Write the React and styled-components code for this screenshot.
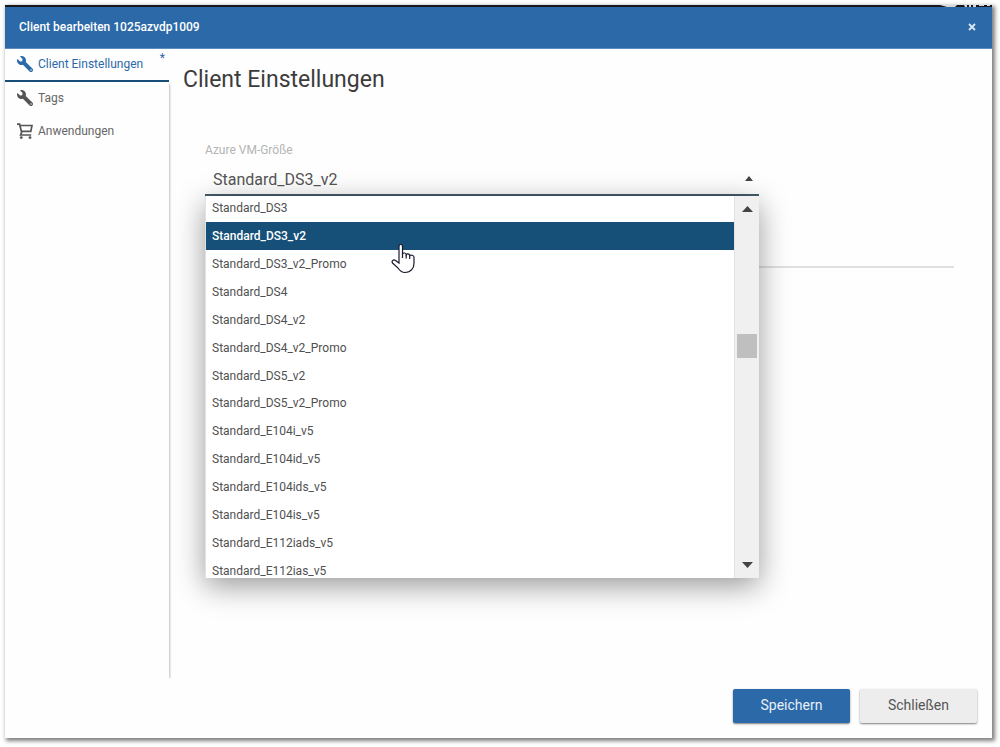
import React, { useState } from 'react';
import styled, { createGlobalStyle } from 'styled-components';
import { FaWrench } from 'react-icons/fa';

const GlobalStyle = createGlobalStyle`
  * {
    box-sizing: border-box;
  }

  body {
    margin: 0;
    background: #FFFFFF;
    color: #444444;
    font-family: Roboto, sans-serif;
    font-size: 12px;
  }

  button, select {
    font-family: inherit;
  }
`;

const Page = styled.div`
  display: flex;
  min-height: 100vh;
  padding: 5px 8px 9px 5px;
`;

const Dialog = styled.section`
  display: flex;
  flex: 1;
  flex-direction: column;
  background: #FEFEFE;
  box-shadow: 2px 2px 4px 1px rgba(0, 0, 0, 0.5);
`;

const TopStrip = styled.div`
  display: flex;
  justify-content: flex-end;
  height: 2px;
  background: #16181C;
`;

const Header = styled.header`
  display: flex;
  align-items: center;
  justify-content: space-between;
  height: 42px;
  padding: 0 14px 2px;
  background: #2B69A8;
  border-bottom: 1px solid #5B8DBF;
  color: #FFFFFF;
`;

const Title = styled.h1`
  margin: 0;
  font-size: 12px;
  font-weight: 500;
  line-height: 16px;
`;

const CloseButton = styled.button`
  display: flex;
  align-items: center;
  justify-content: center;
  width: 12px;
  height: 16px;
  padding: 0;
  border: 0;
  background: none;
  color: #DCE8F4;
`;

const Body = styled.div`
  display: flex;
  flex: 1;
`;

const Sidebar = styled.nav`
  display: flex;
  flex-direction: column;
  flex: 0 0 164px;
`;

const Tab = styled.a`
  display: flex;
  align-items: center;
  gap: 5px;
  height: 33px;
  padding: 0 4px 2px 12px;
  border-bottom: ${props => props.$active ? '2px solid #165078' : '0'};
  color: ${props => props.$active ? '#2B69A8' : '#666666'};
  font-size: 12px;
  text-decoration: none;

  svg {
    width: 16px;
    height: 16px;
    color: ${props => props.$active ? '#2B69A8' : '#555555'};
  }
`;

const WrenchIcon = styled(FaWrench)`
  transform: scaleX(-1);
`;

const Changed = styled.sup`
  align-self: flex-start;
  margin-left: auto;
  font-size: 12px;
  line-height: 18px;
`;

const TabRest = styled.div`
  flex: 1;
  margin-bottom: 58px;
  box-shadow: 3px 0 2px -2px rgba(0, 0, 0, 0.25);
`;

const Main = styled.main`
  display: flex;
  flex: 1;
  flex-direction: column;
  padding: 15px 15px 15px 14px;
`;

const Heading = styled.h2`
  margin: 0;
  color: #3C3C3C;
  font-size: 23px;
  font-weight: 400;
  line-height: 32px;
`;

const Form = styled.div`
  flex: 1;
  padding: 46px 23px 0 22px;
`;

const Label = styled.label`
  display: block;
  color: #B4B4B4;
  font-size: 12px;
  line-height: 16px;
`;

const Field = styled.div`
  position: relative;
  width: 74%;
  min-width: 200px;
  margin-top: 5px;
`;

const Control = styled.div`
  display: flex;
  align-items: center;
  height: 33px;
  padding-right: 6px;
  border-bottom: 2px solid #445B69;
`;

const Select = styled.select`
  flex: 1;
  padding: 2px 8px 0;
  border: 0;
  outline: 0;
  appearance: none;
  background: none;
  color: #555555;
  font-size: 16px;
  line-height: 20px;
`;

const Popup = styled.div`
  position: absolute;
  top: 100%;
  left: 0;
  display: flex;
  width: 100%;
  height: 382px;
  overflow: hidden;
  border-left: 1px solid #E2E2E2;
  background: #FFFFFF;
`;

const Shadow = styled.div`
  position: absolute;
  top: 100%;
  left: 0;
  width: 100%;
  height: 382px;
  box-shadow: 0 8px 28px rgba(0, 0, 0, 0.4);
`;

const List = styled.ul`
  display: grid;
  flex: 1;
  grid-auto-rows: 1fr;
  height: 391px;
  margin: -2px 0 0;
  padding: 0;
  list-style: none;
`;

const Option = styled.li`
  display: flex;
  align-items: center;
  padding: 0 6px;
  background: ${props => props.$selected ? '#165078' : 'transparent'};
  color: ${props => props.$selected ? '#FFFFFF' : '#505050'};
  font-weight: ${props => props.$selected ? 500 : 400};
`;

const Scrollbar = styled.div`
  display: flex;
  flex-direction: column;
  align-items: center;
  width: 25px;
  border-left: 1px solid #E2E2E2;
  background: #F0F0F0;
`;

const ScrollButton = styled.button`
  display: flex;
  align-items: center;
  justify-content: center;
  width: 24px;
  height: 26px;
  padding: 0;
  border: 0;
  background: none;
  color: #444444;
`;

const Track = styled.div`
  flex: 1;
  padding-top: 112px;
`;

const Thumb = styled.div`
  width: 20px;
  height: 24px;
  background: #BFBFBF;
`;

const Divider = styled.hr`
  height: 2px;
  margin: 70px 0 0;
  border: 0;
  background: #E0E0E0;
`;

const Footer = styled.footer`
  display: flex;
  justify-content: flex-end;
  gap: 10px;
`;

const Button = styled.button`
  width: 117px;
  height: 34px;
  padding: 0 0 2px;
  border: 0;
  border-radius: 2px;
  background: ${props => props.$primary ? '#2B69A8' : '#EDEDED'};
  box-shadow: 0 1px 2px rgba(0, 0, 0, 0.5);
  color: ${props => props.$primary ? '#E8F0F8' : '#555555'};
  font-size: 14px;
`;

const Pointer = styled.svg`
  position: absolute;
  top: 80px;
  left: 186px;
  width: 24px;
  height: 32px;
`;

const sizes = [
  'Standard_DS3',
  'Standard_DS3_v2',
  'Standard_DS3_v2_Promo',
  'Standard_DS4',
  'Standard_DS4_v2',
  'Standard_DS4_v2_Promo',
  'Standard_DS5_v2',
  'Standard_DS5_v2_Promo',
  'Standard_E104i_v5',
  'Standard_E104id_v5',
  'Standard_E104ids_v5',
  'Standard_E104is_v5',
  'Standard_E112iads_v5',
  'Standard_E112ias_v5',
];

const CartIcon = () => (
  <svg viewBox="0 0 16 16" aria-hidden="true">
    <path
      d="M0 1.200h2.600L4.800 10M3 2.500h12L13.800 8.300H4.400M4.800 9L3.600 12h10.600"
      fill="none"
      stroke="currentColor"
      strokeWidth="1.700"
    />
    <circle cx="4.300" cy="14.600" r="1.400" fill="currentColor" />
    <circle cx="13" cy="14.600" r="1.400" fill="currentColor" />
  </svg>
);

const Triangle = ({ width, height, down }) => (
  <svg width={width} height={height} viewBox="0 0 10 6" preserveAspectRatio="none" aria-hidden="true">
    <path d={down ? 'M0 0h10L5 6z' : 'M0 6h10L5 0z'} fill="currentColor" />
  </svg>
);

const SizeSelect = () => {
  const [size, setSize] = useState('Standard_DS3_v2');

  return (
    <Field>
      <Shadow />
      <Control>
        <Select id="vm-size" value={size} onChange={e => setSize(e.target.value)}>
          {sizes.map(name => <option key={name}>{name}</option>)}
        </Select>
        <Triangle width={8} height={5} />
      </Control>
      <Popup>
        <List role="listbox" aria-label="Azure VM-Größe">
          {sizes.map(name => (
            <Option
              key={name}
              role="option"
              aria-selected={name === size}
              $selected={name === size}
              onClick={() => setSize(name)}
            >
              {name}
            </Option>
          ))}
        </List>
        <Scrollbar>
          <ScrollButton type="button" aria-label="Nach oben">
            <Triangle width={11} height={6} />
          </ScrollButton>
          <Track>
            <Thumb />
          </Track>
          <ScrollButton type="button" aria-label="Nach unten">
            <Triangle width={11} height={6} down />
          </ScrollButton>
        </Scrollbar>
      </Popup>
      <Pointer viewBox="0 0 24 32" aria-hidden="true">
        <path
          d="M8 18V3.500C8 .8 11.500 .8 11.500 3.500V11c.6-1.500 3.400-1.300 3.700.6.800-1.300 3.300-.9 3.500 1 1-1 4.300-.4 4.300 1.600v6c0 5-3 9.300-9 9.300-4 0-5.500-2-7.200-4.700L1.500 20C.2 17.800 2.500 16.200 4.500 17.500L8 20z"
          fill="#FFFFFF"
          stroke="#1A1A2E"
          strokeWidth="1.200"
        />
        <path d="M11.500 11v4M15.200 12v3.500M18.700 13v3" fill="none" stroke="#1A1A2E" strokeWidth="1.200" />
      </Pointer>
    </Field>
  );
};

const App = () => (
  <Page>
    <GlobalStyle />
    <Dialog>
      <TopStrip>
        <svg width="54" height="2" aria-hidden="true">
          <path d="M2 0h17l-2 2h-8zM26 0h3v2h-2zM31 0h2v2h-2zM35 0h3v2h-3zM41 0h5v1h-5zM49 0h3v1h-3z" fill="#D8D8D8" />
        </svg>
      </TopStrip>
      <Header>
        <Title>Client bearbeiten 1025azvdp1009</Title>
        <CloseButton type="button" aria-label="Fenster schließen">
          <svg width="8" height="8" viewBox="0 0 8 8">
            <path d="M1 1l6 6M7 1L1 7" stroke="currentColor" strokeWidth="1.800" />
          </svg>
        </CloseButton>
      </Header>
      <Body>
        <Sidebar>
          <Tab href="#einstellungen" $active>
            <WrenchIcon />
            Client Einstellungen
            <Changed>*</Changed>
          </Tab>
          <TabRest>
            <Tab href="#tags">
              <WrenchIcon />
              Tags
            </Tab>
            <Tab href="#anwendungen">
              <CartIcon />
              Anwendungen
            </Tab>
          </TabRest>
        </Sidebar>
        <Main>
          <Heading>Client Einstellungen</Heading>
          <Form>
            <Label htmlFor="vm-size">Azure VM-Größe</Label>
            <SizeSelect />
            <Divider />
          </Form>
          <Footer>
            <Button type="button" $primary>Speichern</Button>
            <Button type="button">Schließen</Button>
          </Footer>
        </Main>
      </Body>
    </Dialog>
  </Page>
);

export default App;
